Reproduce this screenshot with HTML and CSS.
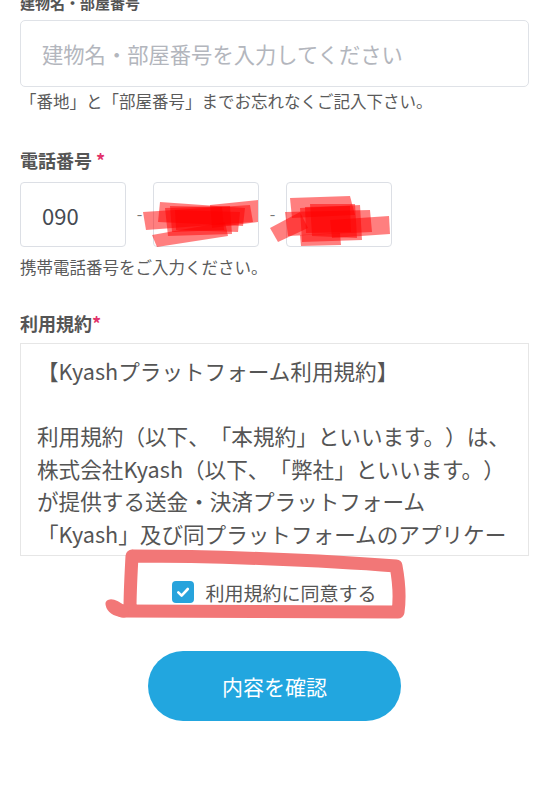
FILE: index.html
```html
<!DOCTYPE html>
<html lang="ja">
<head>
<meta charset="utf-8">
<link rel="stylesheet" href="styles.css">
</head>
<body>
<div class="page">
  <div class="label label-top">建物名・部屋番号</div>
  <div class="input"><span class="placeholder">建物名・部屋番号を入力してください</span></div>
  <p class="help help-1">「番地」と「部屋番号」までお忘れなくご記入下さい。</p>

  <div class="label label-phone">電話番号 <span class="req">*</span></div>
  <div class="phone-row">
    <div class="pbox"><span class="pval">090</span></div>
    <span class="dash">-</span>
    <div class="pbox"></div>
    <span class="dash">-</span>
    <div class="pbox"></div>
  </div>
  <p class="help help-2">携帯電話番号をご入力ください。</p>

  <div class="label label-terms">利用規約<span class="req">*</span></div>
  <div class="terms">
    <p>【Kyashプラットフォーム利用規約】</p>
    <p>&nbsp;</p>
    <p>利用規約（以下、「本規約」といいます。）は、<br>株式会社Kyash（以下、「弊社」といいます。）<br>が提供する送金・決済プラットフォーム<br>「Kyash」及び同プラットフォームのアプリケー<br>ションの利用条件を定めるものです。</p>
  </div>

  <label class="agree">
    <span class="check"><svg viewBox="0 0 22 22" width="22" height="22"><path d="M6.3 11.4l3.3 3.2 6.2-6.6" fill="none" stroke="#fff" stroke-width="2.6" stroke-linecap="round" stroke-linejoin="round"/></svg></span>
    <span class="agree-text">利用規約に同意する</span>
  </label>

  <div class="btn-wrap"><button class="btn">内容を確認</button></div>
</div>

<svg class="marks" width="549" height="800" viewBox="0 0 549 800">
  <g fill="#ff0000" fill-opacity="0.5">
    <polygon points="143,212 250,205 253,222 146,230"/>
    <polygon points="160,202 245,208 243,226 158,222"/>
    <polygon points="152,235 225,222 228,236 157,247"/>
    <polygon points="165,208 230,206 232,234 168,236"/>
    <polygon points="210,205 258,200 258,222 212,228"/>
    <polygon points="175,210 240,212 238,232 176,230"/>
    <polygon points="170,206 222,207 224,230 172,232"/>
    <polygon points="290,198 350,196 355,215 292,218"/>
    <polygon points="270,228 300,212 308,228 278,242"/>
    <polygon points="285,212 370,210 372,232 288,236"/>
    <polygon points="300,208 360,205 362,240 302,242"/>
    <polygon points="330,220 389,216 390,234 332,238"/>
    <polygon points="300,235 340,233 341,245 301,246"/>
    <polygon points="310,204 355,204 357,238 312,236"/>
    <polygon points="305,207 350,206 351,232 306,233"/>
  </g>
  <path d="M133 556 C 210 556, 320 560, 396 566 C 399 582, 400 598, 398 612 C 310 612, 210 611, 122 611 M132 556 C 131 575, 130 592, 130 609" fill="none" stroke="#f27777" stroke-width="13" stroke-linecap="round" stroke-linejoin="round"/>
  <path d="M124 611 C 118 606, 113 603, 110 604 C 111 609, 116 612, 124 613" fill="none" stroke="#f27777" stroke-width="9" stroke-linecap="round" stroke-linejoin="round"/>
</svg>
</body>
</html>
```
FILE: styles.css
```css
html, body {
  margin: 0;
  padding: 0;
  background: #ffffff;
}
body {
  font-family: "Noto Sans CJK JP", "Noto Sans", sans-serif;
  color: #555;
  width: 549px;
  height: 800px;
  overflow: hidden;
  position: relative;
  text-spacing-trim: space-all;
}
.page {
  padding: 0 20px;
}
p { margin: 0; }
.label {
  font-weight: 700;
  color: #555;
}
.label-top {
  font-size: 15px;
  line-height: 20px;
  margin-top: -7px;
  margin-bottom: 7px;
}
.label-phone, .label-terms {
  font-size: 18px;
  line-height: 26px;
}
.label-phone { margin-top: 34px; }
.label-terms { margin-top: 31px; }
.req { color: #e2336b; }
.input {
  height: 65px;
  border: 1px solid #dfe2e7;
  border-radius: 5px;
  display: flex;
  align-items: center;
  padding-left: 21px;
  box-sizing: content-box;
  width: calc(100% - 23px);
}
.placeholder {
  font-size: 21.3px;
  color: #b3b6bd;
}
.help {
  font-size: 16.5px;
  line-height: 24px;
  color: #5a5a5a;
}
.help-1 { margin-top: 2px; }
.help-2 { margin-top: 8px; }
.phone-row {
  display: flex;
  align-items: center;
  margin-top: 9px;
}
.pbox {
  width: 104px;
  height: 63px;
  border: 1px solid #dcdfe5;
  border-radius: 4px;
  display: flex;
  align-items: center;
}
.pval {
  font-size: 22px;
  color: #454a52;
  padding-left: 21px;
}
.dash {
  width: 27px;
  text-align: center;
  font-size: 16px;
  color: #777;
  margin-top: -4px;
}
.terms {
  margin-top: 7px;
  height: 200px;
  border: 1px solid #e6e6e6;
  padding: 11px 10px 0 16px;
  overflow: hidden;
  font-size: 21.6px;
  line-height: 32.5px;
  color: #555;
  white-space: nowrap;
}
.agree {
  display: flex;
  justify-content: center;
  align-items: center;
  gap: 11px;
  margin-top: 21px;
  height: 30px;
}
.check {
  width: 22px;
  height: 22px;
  background: #27a3dc;
  border-radius: 4px;
  display: flex;
}
.agree-text {
  font-size: 19px;
  color: #555;
}
.btn-wrap {
  display: flex;
  justify-content: center;
  margin-top: 44px;
}
.btn {
  width: 253px;
  height: 70px;
  border: none;
  border-radius: 35px;
  background: #22a6df;
  color: #fff;
  font-family: "Noto Sans CJK JP", sans-serif;
  font-size: 21px;
  padding: 0;
}
.marks {
  position: absolute;
  left: 0;
  top: 0;
  pointer-events: none;
}
```
